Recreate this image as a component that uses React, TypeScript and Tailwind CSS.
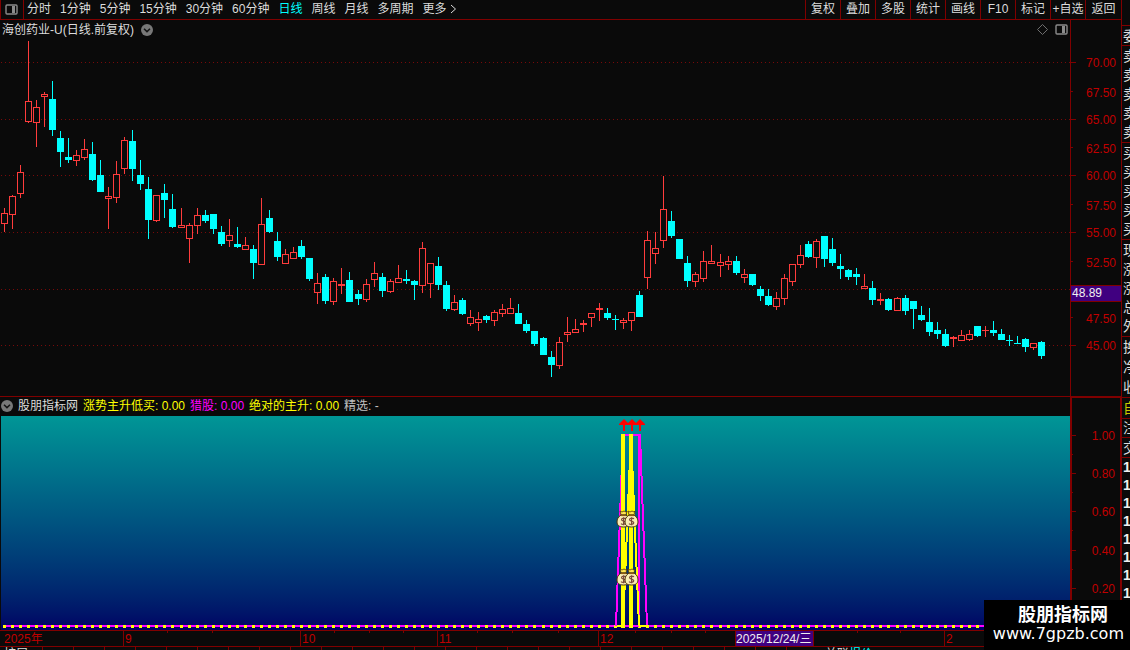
import type { ReactNode } from "react";

const RED_LINE = "#800000";
const AXIS_TEXT = "#c00000";
const UP = "#ff3c3c";
const DOWN = "#00ffff";
const BG = "#0a0a0a";

const PERIODS = ["分时", "1分钟", "5分钟", "15分钟", "30分钟", "60分钟", "日线", "周线", "月线", "多周期"];
const TOOLS = ["复权", "叠加", "多股", "统计", "画线", "F10", "标记", "+自选", "返回"];

// high, body top, body bottom, low (chart units), 1 = close above open
type Candle = [number, number, number, number, 0 | 1];

const CANDLES: Candle[] = [
  [208, 213, 224, 232, 1], [195, 196, 215, 229, 1], [165, 172, 194, 198, 1], [41, 101, 122, 123, 1],
  [100, 107, 123, 147, 1], [92, 94, 97, 127, 1], [81, 99, 130, 136, 0], [131, 138, 152, 167, 0],
  [138, 157, 160, 163, 0], [150, 155, 161, 166, 1], [139, 149, 158, 160, 1], [142, 154, 180, 181, 0],
  [160, 175, 192, 192, 0], [187, 196, 199, 229, 1], [161, 174, 198, 203, 1], [137, 140, 169, 174, 1],
  [130, 141, 169, 181, 0], [160, 175, 184, 190, 0], [177, 189, 220, 239, 0], [195, 195, 221, 222, 1],
  [184, 193, 200, 218, 0], [194, 209, 227, 228, 0], [208, 225, 228, 228, 1], [223, 225, 239, 263, 1],
  [208, 215, 226, 234, 1], [210, 215, 221, 223, 0], [214, 214, 229, 234, 0], [226, 232, 244, 246, 0],
  [219, 235, 241, 247, 1], [227, 244, 247, 248, 0], [237, 245, 250, 250, 1], [245, 249, 263, 279, 0],
  [198, 224, 265, 265, 1], [210, 218, 232, 233, 0], [232, 241, 257, 261, 0], [249, 254, 264, 264, 1],
  [247, 252, 259, 259, 1], [240, 246, 257, 259, 0], [258, 258, 279, 281, 0], [273, 283, 293, 304, 1],
  [274, 277, 301, 304, 0], [278, 281, 302, 305, 1], [268, 284, 286, 294, 1], [272, 280, 302, 302, 0],
  [290, 294, 299, 305, 0], [279, 284, 300, 302, 1], [262, 273, 280, 287, 1], [273, 277, 291, 297, 0],
  [279, 281, 292, 293, 1], [265, 278, 283, 283, 1], [270, 279, 281, 284, 0], [280, 281, 285, 300, 0],
  [242, 248, 286, 293, 1], [263, 263, 284, 298, 1], [257, 266, 285, 290, 0], [281, 285, 309, 311, 0],
  [295, 302, 310, 311, 1], [298, 300, 314, 315, 0], [310, 317, 324, 326, 1], [312, 319, 323, 331, 1],
  [315, 316, 320, 323, 0], [310, 312, 321, 326, 1], [304, 309, 314, 317, 1], [298, 308, 314, 314, 1],
  [304, 313, 324, 324, 0], [320, 324, 331, 333, 0], [331, 331, 344, 346, 0], [337, 338, 355, 355, 0],
  [351, 357, 365, 377, 0], [337, 342, 366, 369, 1], [317, 332, 335, 342, 1], [319, 329, 333, 333, 1],
  [320, 323, 325, 332, 1], [313, 313, 318, 327, 1], [303, 308, 310, 321, 1], [308, 313, 318, 320, 0],
  [315, 319, 320, 330, 0], [318, 320, 323, 329, 1], [312, 312, 321, 331, 1], [291, 295, 317, 317, 0],
  [231, 240, 278, 289, 1], [232, 248, 254, 264, 1], [176, 209, 241, 248, 1], [211, 221, 236, 238, 0],
  [239, 239, 259, 259, 0], [256, 263, 281, 287, 0], [272, 274, 282, 287, 1], [251, 261, 279, 282, 1],
  [245, 261, 264, 264, 1], [254, 262, 266, 277, 1], [256, 261, 265, 270, 1], [256, 261, 273, 275, 0],
  [269, 274, 278, 283, 1], [274, 274, 285, 286, 0], [286, 289, 296, 301, 0], [289, 296, 305, 306, 0],
  [292, 298, 307, 310, 1], [274, 278, 299, 305, 1], [264, 264, 282, 286, 1], [245, 255, 265, 268, 1],
  [241, 244, 257, 258, 0], [239, 241, 258, 268, 1], [236, 236, 259, 267, 0], [238, 249, 263, 266, 0],
  [254, 266, 269, 279, 0], [269, 270, 277, 280, 0], [268, 274, 277, 285, 0], [274, 286, 289, 289, 1],
  [281, 288, 300, 305, 0], [293, 299, 301, 305, 1], [298, 299, 310, 311, 0], [297, 298, 311, 311, 1],
  [295, 298, 311, 315, 0], [301, 301, 309, 329, 0], [306, 315, 320, 321, 0], [308, 322, 332, 336, 0],
  [322, 330, 334, 339, 0], [329, 334, 346, 347, 0], [336, 337, 339, 347, 1], [330, 335, 341, 341, 1],
  [330, 334, 340, 341, 1], [326, 326, 336, 337, 0], [326, 330, 331, 337, 1], [321, 330, 333, 336, 0],
  [329, 334, 340, 340, 0], [335, 340, 341, 346, 0], [336, 343, 344, 344, 0], [338, 339, 347, 352, 0],
  [343, 343, 348, 350, 1], [341, 342, 356, 359, 0],
];

const GRID_ROWS = [62, 119, 175, 232, 289, 345];

const PRICES = [
  { y: 62, label: "70.00" },
  { y: 92, label: "67.50" },
  { y: 119, label: "65.00" },
  { y: 148, label: "62.50" },
  { y: 175, label: "60.00" },
  { y: 205, label: "57.50" },
  { y: 232, label: "55.00" },
  { y: 262, label: "52.50" },
  { y: 318, label: "47.50" },
  { y: 345, label: "45.00" },
];

const LEVELS = [
  { y: 38, label: "1.00" },
  { y: 76, label: "0.80" },
  { y: 114, label: "0.60" },
  { y: 153, label: "0.40" },
  { y: 191, label: "0.20" },
];

const WEEK_TICKS = [167, 212, 334, 369, 403, 477, 512, 558, 635, 671, 705, 857, 900];

// One extra pixel creeps in about every 22 bars
function barX(i: number) {
  return 4 + i * 8 + Math.floor((i + 0.5) / 22.2);
}

function PanelIcon() {
  return (
    <svg width="13" height="11" viewBox="0 0 13 11" aria-hidden="true">
      <rect x="1" y="1" width="11" height="9" rx="1" fill="none" stroke="#8c8c8c" strokeWidth="1.4" />
      <rect x="7" y="2" width="3" height="7" fill="#8c8c8c" />
    </svg>
  );
}

function ChevronBadge() {
  return (
    <svg width="12" height="12" viewBox="0 0 12 12" aria-hidden="true">
      <circle cx="6" cy="6" r="6" fill="#787878" />
      <path d="M3 4.800 6 7.600 9 4.800" fill="none" stroke="#141414" strokeWidth="1.5" />
    </svg>
  );
}

function Toolbar() {
  return (
    <nav className="flex h-5 shrink-0 items-stretch border-b border-[#800000] pb-px text-[#dcdcdc]">
      <button type="button" aria-label="侧栏" className="-mb-px flex w-6 items-center justify-center border-x border-[#800000] pr-px pb-px">
        <PanelIcon />
      </button>
      <div className="flex flex-1 gap-[9px] pl-[3px]">
        {PERIODS.map((p) => (
          <button key={p} type="button" className={p === "日线" ? "text-[#00ffff]" : ""}>
            {p}
          </button>
        ))}
        <button type="button" className="flex items-center gap-[3px]">
          更多
          <svg width="7" height="10" viewBox="0 0 7 10" aria-hidden="true">
            <path d="M1 1 5.500 5 1 9" fill="none" stroke="#dcdcdc" />
          </svg>
        </button>
      </div>
      <div className="-mb-px flex">
        {TOOLS.map((t) => (
          <button key={t} type="button" className="w-[35px] border-l border-[#800000] pb-px whitespace-nowrap last:w-[36px]">
            {t}
          </button>
        ))}
      </div>
    </nav>
  );
}

function CandleBar({ x, data }: { x: number; data: Candle }) {
  const [high, top, bottom, low, up] = data;
  const color = up ? UP : DOWN;
  const height = bottom - top;
  return (
    <g>
      <rect x={x} y={high} width="1" height={low - high} fill={color} />
      <rect x={x - 3} y={top} width="7" height={height} fill={color} />
      {up === 1 && height > 2 && <rect x={x - 2} y={top + 1} width="5" height={height - 2} fill={BG} />}
    </g>
  );
}

function PriceChart() {
  return (
    <svg className="w-full flex-1" shapeRendering="crispEdges" role="img" aria-label="日线">
      <g transform="translate(0 -40)">
        {GRID_ROWS.map((y) => (
          <line key={y} x1="1" x2="100%" y1={y} y2={y} stroke="#780a0a" strokeDasharray="1 3" transform="translate(0 0.5)" />
        ))}
        {CANDLES.map((c, i) => (
          <CandleBar key={i} x={barX(i)} data={c} />
        ))}
      </g>
    </svg>
  );
}

function PriceAxis() {
  return (
    <svg className="h-full w-[51px] shrink-0" shapeRendering="crispEdges">
      <rect width="1" height="100%" fill={RED_LINE} />
      <g transform="translate(0 -20)">
        {PRICES.map(({ y, label }) => {
          const major = label.endsWith(".00");
          return (
            <g key={label}>
              <rect x="1" y={major ? y : y - 1} width={major ? 5 : 2} height="1" fill={RED_LINE} />
              <text x="46" y={y + 5} textAnchor="end" fill={AXIS_TEXT}>
                {label}
              </text>
            </g>
          );
        })}
        <rect x="1" y="285" width="50" height="17" fill={RED_LINE} />
        <rect x="1" y="286" width="50" height="15" fill="#400080" />
        <text x="2" y="297" fill="#f0f0f0">
          48.89
        </text>
      </g>
    </svg>
  );
}

function MoneyBag({ x, y }: { x: number; y: number }) {
  return (
    <g transform={`translate(${x - 6} ${y - 10})`}>
      <path d="M3 0 5 1 7 0 9 1 10 0 9 4 4 4Z" fill="#ffe650" stroke="#4a3208" strokeWidth="0.8" />
      <path d="M4 4C1 6 0 8 0 11 0 14 2 16 6.500 16 11 16 13 14 13 11 13 8 12 6 9 4Z" fill="#f8ecb4" stroke="#4a3208" strokeWidth="1" />
      <path d="M4 4.500H9" stroke="#8a5a10" strokeWidth="1.2" />
      <path d="M9 7.800C8 6.800 4.500 6.800 4.500 8.800 4.500 10.500 8.800 9.800 8.800 11.800 8.800 13.700 5 13.600 4 12.600M6.600 6.300V14.300" fill="none" stroke="#7a4a3a" strokeWidth="1.200" />
    </g>
  );
}

function SignalChart() {
  const base = 210;
  return (
    <div className="min-w-0 flex-1 bg-linear-to-b from-[#009696] to-[#000064]">
      <svg className="h-full w-full" role="img" aria-label="股朋指标网">
        <g shapeRendering="crispEdges">
          <rect x="2" y={base - 1} width="100%" height="2" fill="#ff00ff" />
          {CANDLES.map((_, i) => (
            <rect key={i} x={barX(i) - 2} y={base - 1} width="3" height="3" fill="#ffff00" />
          ))}
          {[1048, 1056, 1064].map((x) => (
            <rect key={x} x={x} y={base - 1} width="3" height="3" fill="#ffff00" />
          ))}
          <polyline points="615,210 622,19 639,19 646,210" fill="none" stroke="#ff00ff" strokeWidth="2" />
          <line x1="638" x2="638" y1="19" y2="211" stroke="#ff00ff" strokeWidth="2" />
          <polyline points="622,210 630,19 638,210" fill="none" stroke="#ffff00" strokeWidth="2" />
          <rect x="616" y={base - 1} width="8" height="2" fill="#ffff00" />
          <rect x="638" y={base - 1} width="9" height="2" fill="#ffff00" />
          <rect x="620" y="18" width="4" height="194" fill="#ffff00" />
          <rect x="628" y="18" width="4" height="194" fill="#ffff00" />
        </g>
        {[622, 630, 638].map((x) => (
          <path key={x} transform={`translate(${x} 2)`} d="M1 1 6 6V7H2V13H0V7H-4V6Z" fill="#ff0000" />
        ))}
        {[105, 163].map((y) => (
          <g key={y}>
            <MoneyBag x={622} y={y} />
            <MoneyBag x={630} y={y} />
          </g>
        ))}
      </svg>
    </div>
  );
}

function LevelAxis() {
  return (
    <svg className="h-full w-[51px] shrink-0" shapeRendering="crispEdges">
      <rect width="2" height="100%" fill={RED_LINE} />
      <rect width="51" height="1" fill={RED_LINE} />
      <rect x="50" width="1" height="100%" fill={RED_LINE} />
      {LEVELS.map(({ y, label }) => (
        <g key={label}>
          <rect x="2" y={y} width="4" height="1" fill={RED_LINE} />
          <rect x="2" y={y + 19} width="1" height="1" fill={RED_LINE} />
          <text x="45" y={y + 5} textAnchor="end" fill={AXIS_TEXT}>
            {label}
          </text>
        </g>
      ))}
    </svg>
  );
}

function TimeAxis() {
  return (
    <div className="relative flex h-[17px] shrink-0 items-stretch overflow-hidden border-y border-[#800000] leading-4 text-[#c00000]">
      <span className="w-[123px] pl-1">2025年</span>
      <span className="w-[177px] border-l border-[#800000] pl-px">9</span>
      <span className="w-[137px] border-l border-[#800000] pl-px">10</span>
      <span className="w-[161px] border-l border-[#800000] pl-px">11</span>
      <span className="w-[137px] border-l border-[#800000] pl-px">12</span>
      <span className="w-[79px] border-x border-[#800000] bg-[#400080] whitespace-nowrap text-[#f0f0f0]">2025/12/24/三</span>
      <span className="w-[130px]" />
      <span className="flex-1 border-l border-[#800000] pl-px">2</span>
      <svg className="absolute inset-0 h-full w-full" aria-hidden="true">
        {WEEK_TICKS.map((x) => (
          <rect key={x} x={x} width="1" height="2" fill={RED_LINE} />
        ))}
      </svg>
    </div>
  );
}

function BottomTabs() {
  return (
    <div className="flex h-[3px] shrink-0 overflow-hidden leading-[14px] text-[#dcdcdc]">
      <span className="w-[42px] pl-1">扩展</span>
      {Array.from({ length: 25 }).map((_, i) => (
        <span key={i} className="w-[31px] shrink-0 border-l border-[#800000]" />
      ))}
      <span className="pl-2 whitespace-nowrap">
        关联<span className="text-[#00ffff]">报价</span>
      </span>
    </div>
  );
}

function QuoteGroup({ children, className }: { children: ReactNode; className: string }) {
  return <div className={`flex shrink-0 flex-col justify-around border-t border-[#800000] pl-px ${className}`}>{children}</div>;
}

function QuoteStrip() {
  return (
    <aside className="w-[9px] shrink-0 overflow-hidden border-l border-[#800000] pt-[25px] text-sm leading-[18px] whitespace-nowrap text-[#dcdcdc]">
      <QuoteGroup className="h-[20px]">
        <span>委</span>
      </QuoteGroup>
      <QuoteGroup className="h-[97px]">
        {[5, 4, 3, 2, 1].map((n) => (
          <span key={n}>卖</span>
        ))}
      </QuoteGroup>
      <QuoteGroup className="h-[97px]">
        {[1, 2, 3, 4, 5].map((n) => (
          <span key={n}>买</span>
        ))}
      </QuoteGroup>
      <QuoteGroup className="h-[97px]">
        <span>现</span>
        <span>涨</span>
        <span>涨</span>
        <span>总</span>
        <span>外</span>
      </QuoteGroup>
      <QuoteGroup className="h-[61px]">
        <span>换</span>
        <span>净</span>
        <span>收</span>
      </QuoteGroup>
      <QuoteGroup className="h-[21px] text-[#c8c800]">
        <span>自</span>
      </QuoteGroup>
      <QuoteGroup className="h-[19px]">
        <span>注</span>
      </QuoteGroup>
      <QuoteGroup className="h-[20px]">
        <span>交</span>
      </QuoteGroup>
      <QuoteGroup className="font-bold text-[#f0f0f0]">
        {Array.from({ length: 8 }).map((_, i) => (
          <span key={i}>1</span>
        ))}
      </QuoteGroup>
    </aside>
  );
}

export default function App() {
  return (
    <div className="relative flex h-screen overflow-hidden bg-[#0a0a0a] text-xs [font-family:'Liberation_Sans','Noto_Sans_CJK_SC',sans-serif]">
      <main className="flex min-w-0 flex-1 flex-col">
        <Toolbar />

        <section className="flex h-[376px] shrink-0">
          <div className="flex min-w-0 flex-1 flex-col overflow-hidden">
            <header className="flex h-5 shrink-0 items-center gap-[7px] pr-[2px] pb-px pl-[2px] text-[#dcdcdc]">
              <h1>海创药业-U(日线.前复权)</h1>
              <button type="button" aria-label="切换">
                <ChevronBadge />
              </button>
              <span className="flex-1" />
              <svg width="11" height="11" viewBox="0 0 11 11" aria-hidden="true">
                <path d="M5.500 0.500 10.500 5.500 5.500 10.500 0.500 5.500Z" fill="none" stroke="#6e6e6e" />
              </svg>
              <PanelIcon />
            </header>
            <PriceChart />
          </div>
          <PriceAxis />
        </section>

        <section className="flex min-h-0 flex-1 border-t border-[#800000]">
          <div className="flex min-w-0 flex-1 flex-col pl-px">
            <header className="flex h-[19px] shrink-0 items-center gap-[5px] pb-px whitespace-nowrap">
              <ChevronBadge />
              <span className="text-[#dcdcdc]">股朋指标网</span>
              <span className="text-[#ffff00]">涨势主升低买: 0.00</span>
              <span className="text-[#ff00ff]">猎股: 0.00</span>
              <span className="text-[#ffff00]">绝对的主升: 0.00</span>
              <span className="text-[#c0c0c0]">精选: -</span>
            </header>
            <div className="flex min-h-0 flex-1">
              <SignalChart />
            </div>
          </div>
          <LevelAxis />
        </section>

        <TimeAxis />
        <BottomTabs />
      </main>

      <QuoteStrip />

      <div className="absolute right-0 bottom-0 flex h-[50px] w-[146px] flex-col items-end bg-black pt-[5px] pr-[6px] text-white">
        <span className="pr-4 text-lg leading-5 font-bold">股朋指标网</span>
        <a href="#" className="text-base leading-[18px] [font-family:'DejaVu_Sans',sans-serif]">
          www.7gpzb.com
        </a>
      </div>
    </div>
  );
}
